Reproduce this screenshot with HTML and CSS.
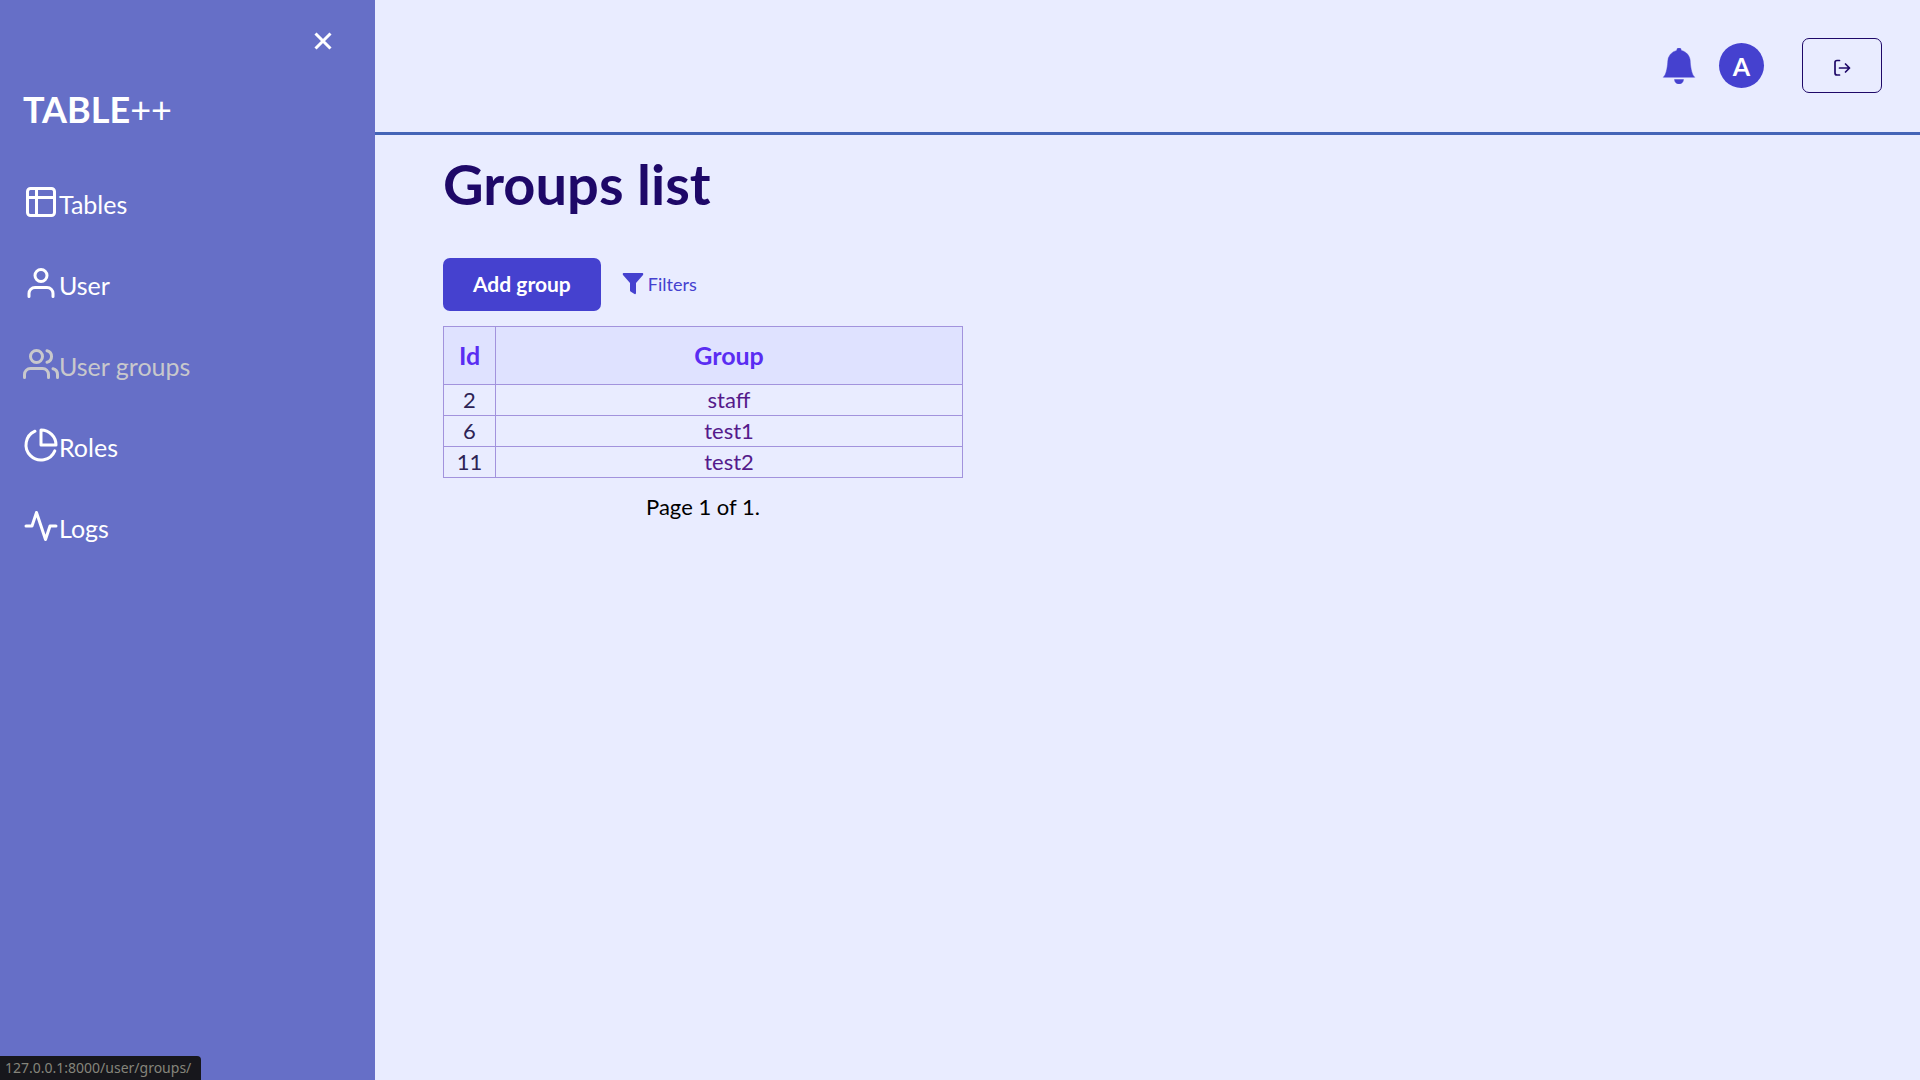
FILE: index.html
```html
<!DOCTYPE html>
<html lang="en">
<head>
<meta charset="utf-8">
<title>Groups list</title>
<link rel="stylesheet" href="styles.css">
</head>
<body>
<div class="layout">
  <aside class="sidebar">
    <button class="close" type="button" aria-label="Close menu">
      <svg width="18" height="18" viewBox="0 0 18 18" fill="none" stroke="currentColor" stroke-width="3"><path d="M1.5 1.5l15 15M16.5 1.5l-15 15"/></svg>
    </button>
    <div class="brand"><strong>TABLE</strong>++</div>
    <nav class="menu">
      <a class="menu-link" href="#tables">
        <svg class="menu-icon" viewBox="0 0 24 24"><rect x="3" y="3" width="18" height="18" rx="2"/><path d="M3 9h18M9 3v18"/></svg>
        <span>Tables</span>
      </a>
      <a class="menu-link" href="#user">
        <svg class="menu-icon" viewBox="0 0 24 24"><path d="M20 21v-2a4 4 0 0 0-4-4H8a4 4 0 0 0-4 4v2"/><circle cx="12" cy="7" r="4"/></svg>
        <span>User</span>
      </a>
      <a class="menu-link active" href="#groups">
        <svg class="menu-icon" viewBox="0 0 24 24"><path d="M17 21v-2a4 4 0 0 0-4-4H5a4 4 0 0 0-4 4v2"/><circle cx="9" cy="7" r="4"/><path d="M23 21v-2a4 4 0 0 0-3-3.870M16 3.130a4 4 0 0 1 0 7.750"/></svg>
        <span>User groups</span>
      </a>
      <a class="menu-link" href="#roles">
        <svg class="menu-icon" viewBox="0 0 24 24"><path d="M21.210 15.890A10 10 0 1 1 8 2.830"/><path d="M22 12A10 10 0 0 0 12 2v10z"/></svg>
        <span>Roles</span>
      </a>
      <a class="menu-link" href="#logs">
        <svg class="menu-icon" viewBox="0 0 24 24"><path d="M22 12h-4l-3 9L9 3l-3 9H2"/></svg>
        <span>Logs</span>
      </a>
    </nav>
  </aside>

  <div class="page">
    <header class="topbar">
      <button class="bell" type="button" aria-label="Notifications">
        <svg width="36" height="36" viewBox="0 0 16 16" fill="currentColor"><path d="M8 16a2 2 0 0 0 2-2H6a2 2 0 0 0 2 2m.995-14.901a1 1 0 1 0-1.990 0A5 5 0 0 0 3 6c0 1.098-.5 6-2 7h14c-1.500-1-2-5.902-2-7 0-2.420-1.720-4.440-4.005-4.901" stroke="currentColor" stroke-width=".2"/></svg>
      </button>
      <span class="avatar">A</span>
      <button class="logout" type="button" aria-label="Log out">
        <svg width="18" height="18" viewBox="0 0 18 18" fill="none" stroke="currentColor" stroke-width="1.700" stroke-linecap="round" stroke-linejoin="round"><path d="M6.500 1.500H4Q2 1.500 2 3.500v10.500Q2 16 4 16h2.500M6.500 9H16.500M12.500 5l4 4-4 4"/></svg>
      </button>
    </header>

    <main class="content">
      <h1 class="title">Groups list</h1>
      <div class="toolbar">
        <button class="add" type="button">Add group</button>
        <button class="filters" type="button">
          <svg width="22" height="22" viewBox="0 0 22 22" fill="currentColor"><path d="M1.500 0h19c.8 0 1 1 .5 2L14 10V20q0 1.500-1.500 1L8.500 18.500Q8 18 8 17.500V10L1 2C.5 1 .7 0 1.500 0z"/></svg>
          Filters
        </button>
      </div>
      <div class="listing">
        <table class="groups">
          <thead>
            <tr><th class="id" scope="col">Id</th><th scope="col">Group</th></tr>
          </thead>
          <tbody>
            <tr><td>2</td><td><a href="#staff">staff</a></td></tr>
            <tr><td>6</td><td><a href="#test1">test1</a></td></tr>
            <tr><td>11</td><td><a href="#test2">test2</a></td></tr>
          </tbody>
        </table>
        <p class="pager">Page 1 of 1.</p>
      </div>
    </main>
  </div>
</div>
<div class="status">127.0.0.1:8000/user/groups/</div>
</body>
</html>
```
FILE: styles.css
```css
* {
  box-sizing: border-box;
}

body {
  margin: 0;
  background: #e9ecff;
  color: #000;
  font: 22px/30px Lato, "Open Sans", sans-serif;
}

button {
  margin: 0;
  padding: 0;
  border: 0;
  background: none;
  color: inherit;
  font: inherit;
  cursor: pointer;
}

svg {
  display: block;
  flex: none;
}

.layout {
  display: flex;
  min-height: 100vh;
}

.sidebar {
  display: flex;
  flex: none;
  flex-direction: column;
  width: 375px;
  padding: 32px 23px;
  background: #666fc7;
  color: #fff;
}

.close {
  align-self: flex-end;
  margin-right: 20px;
}

.brand {
  margin-top: 38px;
  font-size: 36px;
  line-height: 42px;
}

.menu {
  display: flex;
  flex-direction: column;
  gap: 45px;
  margin-top: 54px;
}

.menu-link {
  display: flex;
  align-items: center;
  color: #fff;
  font-size: 25px;
  text-decoration: none;
}

.menu-link span {
  padding-top: 4px;
  line-height: 32px;
}

.menu-link.active {
  color: #c8c8cc;
}

.menu-icon {
  width: 36px;
  height: 36px;
  fill: none;
  stroke: currentColor;
  stroke-width: 2;
  stroke-linecap: round;
  stroke-linejoin: round;
}

.page {
  flex: 1;
  min-width: 0;
}

.topbar {
  display: flex;
  align-items: center;
  justify-content: flex-end;
  padding: 38px 38px 39px;
  border-bottom: 3px solid #4464b7;
}

.bell {
  margin-right: 22px;
  color: #4541cf;
}

.avatar {
  display: flex;
  align-items: center;
  justify-content: center;
  width: 45px;
  height: 45px;
  margin-right: 38px;
  border-radius: 50%;
  background: #4541cf;
  color: #fff;
  font-size: 25px;
  font-weight: 700;
}

.logout {
  display: flex;
  align-items: center;
  justify-content: center;
  width: 80px;
  height: 55px;
  padding-top: 4px;
  border: 1px solid #1e0868;
  border-radius: 7px;
  color: #1e0868;
}

.content {
  padding: 18px 68px;
}

.title {
  margin: 0 0 43px;
  color: #1e0868;
  font-size: 56px;
  line-height: 62px;
}

.toolbar {
  display: flex;
  align-items: center;
  gap: 21px;
  margin-bottom: 15px;
}

.add {
  padding: 11px 30px 12px;
  border-radius: 7px;
  background: #4541cf;
  color: #fff;
  font-size: 21px;
  font-weight: 700;
}

.filters {
  display: flex;
  align-items: center;
  gap: 4px;
  padding-bottom: 2px;
  color: #4541cf;
  font-size: 18px;
}

.listing {
  width: 520px;
}

.groups {
  width: 100%;
  border-collapse: collapse;
  text-align: center;
}

.groups th,
.groups td {
  padding: 0;
  border: 1px solid #a293dd;
}

.groups th {
  padding: 13px 0 14px;
  background: #dfe2ff;
  color: #5a2df2;
  font-size: 25px;
}

.groups .id {
  width: 52px;
}

.groups td {
  color: #2d2355;
}

.groups a {
  color: #551a8b;
  text-decoration: none;
}

.pager {
  margin: 14px 0 0;
  text-align: center;
}

.status {
  position: fixed;
  bottom: 0;
  left: 0;
  padding: 0 10px 1px 5px;
  border-radius: 0 4px 0 0;
  background: #17171c;
  color: #85857b;
  font: 14px/23px "Noto Sans", sans-serif;
}
```
